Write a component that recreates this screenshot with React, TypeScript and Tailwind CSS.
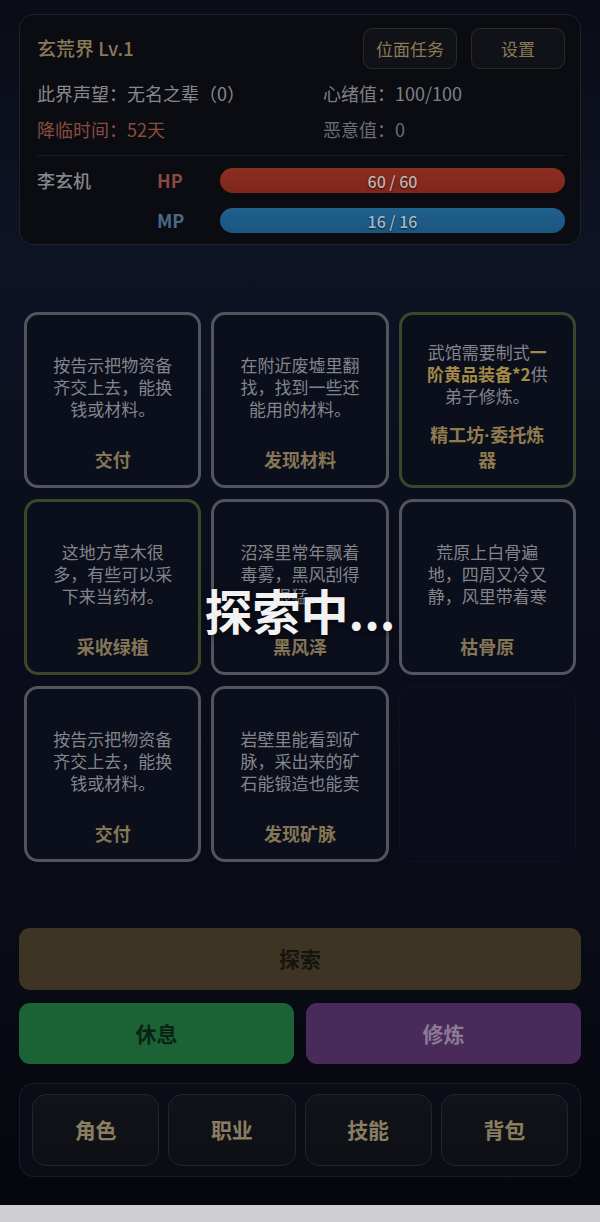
import React from 'react';

interface CardData {
  desc: React.ReactNode;
  title: React.ReactNode;
  tone?: 'gray' | 'green';
  titleClass?: string;
}

const cards: CardData[] = [
  { desc: '按告示把物资备齐交上去，能换钱或材料。', title: '交付' },
  { desc: '在附近废墟里翻找，找到一些还能用的材料。', title: '发现材料' },
  {
    desc: (
      <>
        武馆需要制式<span className="font-bold text-[#a48a45]">一阶黄品装备*2</span>供弟子修炼。
      </>
    ),
    title: (
      <>
        精工坊<span className="font-['Liberation_Sans',sans-serif]">·</span>委托炼器
      </>
    ),
    tone: 'green',
    titleClass: 'text-[#8f7c4e]',
  },
  { desc: '这地方草木很多，有些可以采下来当药材。', title: '采收绿植', tone: 'green' },
  { desc: '沼泽里常年飘着毒雾，黑风刮得很猛。', title: '黑风泽' },
  { desc: '荒原上白骨遍地，四周又冷又静，风里带着寒意。', title: '枯骨原' },
  { desc: '按告示把物资备齐交上去，能换钱或材料。', title: '交付' },
  { desc: '岩壁里能看到矿脉，采出来的矿石能锻造也能卖', title: '发现矿脉' },
];

const EventCard: React.FC<CardData> = ({ desc, title, tone = 'gray', titleClass }) => (
  <div
    className={`h-[176px] rounded-[14px] border-[3px] bg-[#0b0e1b] flex flex-col items-center pt-[10px] pb-[14px] ${
      tone === 'green' ? 'border-[#3a4829]' : 'border-[#52555d]'
    }`}
  >
    <div className="flex-1 flex items-center">
      <div className="w-[125px] max-h-[66px] overflow-hidden text-center text-[17px] leading-[22px] text-[#84858a]">
        {desc}
      </div>
    </div>
    <div className={`w-[125px] text-center text-[18px] leading-[23px] font-bold ${titleClass || 'text-[#857656]'}`}>
      {title}
    </div>
  </div>
);

const Bar: React.FC<{ text: string; tone: 'hp' | 'mp' }> = ({ text, tone }) => (
  <div
    className={`h-[25px] rounded-full flex items-center justify-center text-[16px] font-medium [text-shadow:0_1px_2px_rgba(0,0,0,0.7)] ${
      tone === 'hp'
        ? 'bg-[linear-gradient(180deg,#8c2e22,#80261c)] text-[#c4b4ad]'
        : 'bg-[linear-gradient(180deg,#20608d,#1b5680)] text-[#a7b9c7]'
    }`}
  >
    {text}
  </div>
);

export default function App() {
  return (
    <div className="relative w-full h-[1222px] font-['Noto_Sans_CJK_SC','Noto_Sans',sans-serif] overflow-hidden">
      <div className="h-[1205px] bg-[linear-gradient(180deg,#0a0c15_0%,#0e1325_21%,#0b0e1b_42%,#090b16_78%,#06070d_100%)] px-[19px] pt-[14px]">
        {/* status panel */}
        <div className="h-[231px] rounded-[14px] border border-[#1e222a] bg-[#0a0c12] pl-[17px] pr-[15px] pt-[13px]">
          <div className="flex justify-between items-center h-[41px]">
            <span className="text-[19px] font-medium text-[#8a7957]">玄荒界 Lv.1</span>
            <div className="flex gap-[14px]">
              <button className="w-[94px] h-[41px] rounded-[9px] border border-[#2a2a29] bg-[#111218] text-[17px] text-[#8b7a56]">
                位面任务
              </button>
              <button className="w-[94px] h-[41px] rounded-[9px] border border-[#2a2a29] bg-[#111218] text-[17px] text-[#8b7a56]">
                设置
              </button>
            </div>
          </div>
          <div className="mt-[6px] grid grid-cols-[286px_1fr] text-[18px] leading-[36px]">
            <span className="text-[#87888d]">此界声望：无名之辈（0）</span>
            <span className="text-[#7f8087]">心绪值：100/100</span>
            <span className="text-[#8b4c3e]">降临时间：52天</span>
            <span className="text-[#6c6d75]">恶意值：0</span>
          </div>
          <div className="mt-[8px] h-px bg-[#1b1e26]" />
          <div className="mt-[11px] grid grid-cols-[120px_63px_1fr] gap-y-[13px] items-center">
            <span className="text-[18px] font-medium text-[#86878b] leading-[25px]">李玄机</span>
            <span className="text-[18px] font-bold text-[#8a4a3f]">HP</span>
            <Bar text="60 / 60" tone="hp" />
            <span />
            <span className="text-[18px] font-bold text-[#4b6887]">MP</span>
            <Bar text="16 / 16" tone="mp" />
          </div>
        </div>

        {/* event grid */}
        <div className="mt-[67px] mx-[5px] grid grid-cols-3 gap-x-[10px] gap-y-[11px]">
          {cards.map((c, i) => (
            <EventCard key={i} {...c} />
          ))}
          <div className="h-[176px] rounded-[14px] border border-[#10131f] bg-[#0a0d19]" />
        </div>

        {/* actions */}
        <button className="mt-[66px] w-full h-[62px] rounded-[11px] bg-[#3e3424] text-[21px] font-bold text-[#17140d]">
          探索
        </button>
        <div className="mt-[13px] grid grid-cols-2 gap-[12px]">
          <button className="h-[61px] rounded-[11px] bg-[#1b6335] text-[21px] font-bold text-[#0b2314]">休息</button>
          <button className="h-[61px] rounded-[11px] bg-[#4a2a5b] text-[21px] font-bold text-[#8b7b94]">修炼</button>
        </div>

        {/* nav */}
        <div className="mt-[19px] h-[94px] rounded-[14px] border border-[#1a1d27] bg-[#0b0d16] px-[12px] pt-[10px]">
          <div className="grid grid-cols-4 gap-[9px]">
            {['角色', '职业', '技能', '背包'].map(t => (
              <button
                key={t}
                className="h-[72px] rounded-[14px] border border-[#22252c] bg-[linear-gradient(180deg,#121319,#0f1016)] text-[21px] font-bold text-[#8a7e61]"
              >
                {t}
              </button>
            ))}
          </div>
        </div>
      </div>
      <div className="h-[17px] bg-[#cfcfd3]" />

      {/* exploring overlay */}
      <div className="absolute inset-0 flex items-center justify-center pointer-events-none">
        <span className="text-[48px] font-bold text-[#f2f2f2] [text-shadow:0_2px_6px_rgba(0,0,0,0.6)] -mt-[4px]">
          探索中...
        </span>
      </div>
    </div>
  );
}
